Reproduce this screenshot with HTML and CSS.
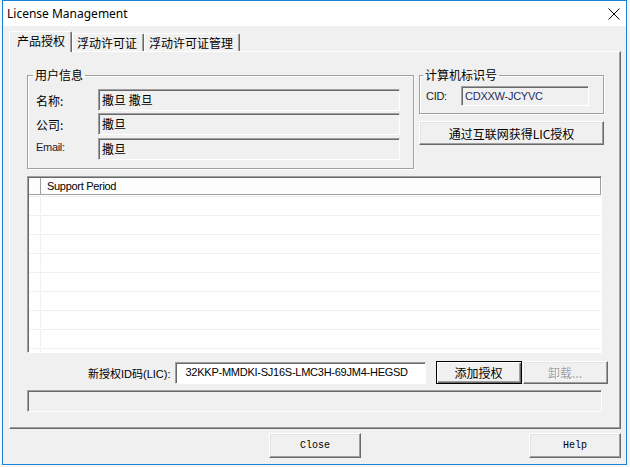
FILE: index.html
```html
<!DOCTYPE html>
<html lang="zh">

<head>
  <meta charset="UTF-8">
  <title>License Management</title>
  <link rel="stylesheet" href="styles.css">
</head>

<body>
  <div class="window">
    <div class="titlebar">
      <span class="title">License Management</span>
      <svg class="close-x" width="12" height="12" viewBox="0 0 12 12">
        <path d="M0.5 0.5 L11.5 11.5 M11.5 0.5 L0.5 11.5" stroke="#000" stroke-width="1" fill="none" />
      </svg>
    </div>

    <div class="dialog">
      <div class="tabs">
        <div class="tab active">产品授权</div>
        <div class="tab">浮动许可证</div>
        <div class="tab">浮动许可证管理</div>
      </div>

      <div class="panel">
        <div class="top-row">
          <!-- user info -->
          <fieldset class="group user-group">
            <legend>用户信息</legend>
            <div class="field-row">
              <span class="label">名称:</span>
              <div class="field">撒旦 撒旦</div>
            </div>
            <div class="field-row">
              <span class="label">公司:</span>
              <div class="field">撒旦</div>
            </div>
            <div class="field-row email-row">
              <span class="label latin email-label">Email:</span>
              <div class="field">撒旦</div>
            </div>
          </fieldset>

          <div class="right-col">
            <fieldset class="group cid-group">
              <legend>计算机标识号</legend>
              <div class="field-row cid-row">
                <span class="label latin cid-label">CID:</span>
                <div class="field cid-field">CDXXW-JCYVC</div>
              </div>
            </fieldset>
            <button class="btn wide-btn">通过互联网获得LIC授权</button>
          </div>
        </div>

        <!-- license list -->
        <div class="listview">
          <div class="lv-header">
            <div class="lv-col0"></div>
            <div class="lv-col1">Support Period</div>
          </div>
          <div class="lv-body">
            <div class="lv-row"><div class="lv-col0"></div><div class="lv-col1"></div></div>
            <div class="lv-row"><div class="lv-col0"></div><div class="lv-col1"></div></div>
            <div class="lv-row"><div class="lv-col0"></div><div class="lv-col1"></div></div>
            <div class="lv-row"><div class="lv-col0"></div><div class="lv-col1"></div></div>
            <div class="lv-row"><div class="lv-col0"></div><div class="lv-col1"></div></div>
            <div class="lv-row"><div class="lv-col0"></div><div class="lv-col1"></div></div>
            <div class="lv-row"><div class="lv-col0"></div><div class="lv-col1"></div></div>
            <div class="lv-row"><div class="lv-col0"></div><div class="lv-col1"></div></div>
            <div class="lv-row"><div class="lv-col0"></div><div class="lv-col1"></div></div>
            <div class="lv-row"><div class="lv-col0"></div><div class="lv-col1"></div></div>
          </div>
        </div>

        <div class="lic-row">
          <span class="lic-label">新授权ID码(LIC):</span>
          <div class="lic-input">32KKP-MMDKI-SJ16S-LMC3H-69JM4-HEGSD</div>
          <button class="btn default-btn">添加授权</button>
          <button class="btn disabled-btn" disabled>卸载...</button>
        </div>

        <div class="statusbar"></div>
      </div>

      <div class="footer">
        <button class="btn sys-btn close-btn">Close</button>
        <button class="btn sys-btn help-btn">Help</button>
      </div>
    </div>
  </div>
</body>

</html>
```

FILE: styles.css
```css
/* General */
body {
  margin: 0;
  background-color: #f6f6f6;
  font-family: 'Liberation Sans', 'Noto Sans CJK SC', sans-serif;
  font-size: 12px;
  color: #000;
}

.window {
  margin-left: 2px;
  width: 625px;
  height: 465px;
  box-sizing: border-box;
  border: 1px solid #1883d7;
  background-color: #f0f0f0;
  display: flex;
  flex-direction: column;
}

/* Title bar */
.titlebar {
  height: 25px;
  background-color: #ffffff;
  display: flex;
  align-items: center;
  justify-content: space-between;
  padding-left: 4px;
}

.title {
  font-family: 'Noto Sans', sans-serif;
  font-size: 12px;
  color: #000;
}

.close-x {
  margin-right: 6px;
}

/* Dialog body */
.dialog {
  flex: 1;
  padding: 5px 0 0 6px;
}

.tabs {
  display: flex;
  align-items: flex-end;
  height: 20px;
}

.tab {
  height: 18px;
  box-sizing: border-box;
  padding: 0 6px 0 4px;
  border-top: 1px solid #ffffff;
  border-left: 1px solid #ffffff;
  border-right: 1px solid #696969;
  box-shadow: inset -1px 0 0 #a0a0a0;
  background-color: #f0f0f0;
  font-family: 'Noto Sans CJK SC', sans-serif;
  font-size: 12px;
  line-height: 17px;
  border-radius: 2px 2px 0 0;
}

.tab.active {
  height: 21px;
  margin-bottom: -1px;
  padding: 0 6px 0 7px;
  line-height: 18px;
  position: relative;
  z-index: 1;
}

.panel {
  width: 612px;
  height: 378px;
  box-sizing: border-box;
  border-top: 1px solid #ffffff;
  border-left: 1px solid #ffffff;
  border-right: 1px solid #696969;
  border-bottom: 1px solid #696969;
  box-shadow: inset -1px -1px 0 #a0a0a0;
  padding: 15px 0 0 17px;
}

.top-row {
  display: flex;
  align-items: flex-start;
}

/* Group boxes */
.group {
  margin: 0;
  min-width: 0;
  box-sizing: border-box;
  border: 1px solid #a0a0a0;
  box-shadow: 1px 1px 0 #ffffff, inset 1px 1px 0 #ffffff;
}

.group legend {
  padding: 0 2px;
  margin-left: -3px;
  font-family: 'Noto Sans CJK SC', sans-serif;
  font-size: 12px;
  line-height: 16px;
}

.user-group {
  width: 387px;
  padding: 6px 12px 8px 8px;
  display: flex;
  flex-direction: column;
  gap: 2px;
}

.email-row {
  margin-top: 1px;
}

.field-row {
  display: flex;
  align-items: center;
}

.label {
  width: 62px;
  font-family: 'Noto Sans CJK SC', sans-serif;
  font-size: 12px;
}

.label.latin {
  font-family: 'Liberation Sans', sans-serif;
  font-size: 11px;
  letter-spacing: -0.3px;
  color: #1a1a2a;
}

.email-label {
  margin-top: -4px;
}

.field {
  width: 302px;
  height: 22px;
  box-sizing: border-box;
  border: 1px solid;
  border-color: #a0a0a0 #ffffff #ffffff #a0a0a0;
  box-shadow: inset 1px 1px 0 #696969;
  padding-left: 3px;
  font-family: 'Noto Sans CJK SC', sans-serif;
  font-size: 12px;
  line-height: 20px;
}

.right-col {
  margin-left: 5px;
  display: flex;
  flex-direction: column;
}

.cid-group {
  width: 185px;
  padding: 3px 14px 7px 6px;
}

.cid-label {
  width: 35px;
  color: #1f2f5f;
}

.cid-field {
  width: 128px;
  height: 20px;
  line-height: 18px;
  font-family: 'Liberation Sans', sans-serif;
  font-size: 11px;
  letter-spacing: -0.25px;
  color: #1f2f5f;
}

/* Buttons */
.btn {
  margin: 0;
  padding: 0;
  box-sizing: border-box;
  background-color: #f0f0f0;
  border: 1px solid;
  border-color: #ffffff #696969 #696969 #ffffff;
  box-shadow: inset -1px -1px 0 #a0a0a0, inset 1px 1px 0 #e3e3e3;
  font-family: 'Noto Sans CJK SC', sans-serif;
  font-size: 12px;
  color: #000;
  text-align: center;
}

.wide-btn {
  margin-top: 7px;
  width: 185px;
  height: 24px;
}

/* List view */
.listview {
  margin-top: 7px;
  width: 575px;
  height: 177px;
  box-sizing: border-box;
  border: 1px solid;
  border-color: #a0a0a0 #ffffff #ffffff #a0a0a0;
  box-shadow: inset 1px 1px 0 #696969;
  background-color: #ffffff;
  padding: 1px 0 0 1px;
  overflow: hidden;
}

.lv-header {
  display: flex;
  height: 16px;
  border-bottom: 1px solid #a0a0a0;
  background-color: #fdfdfd;
}

.lv-header .lv-col1 {
  font-size: 11px;
  letter-spacing: -0.3px;
  line-height: 16px;
  padding-left: 6px;
  width: 559px;
  border-right: 1px solid #a0a0a0;
}

.lv-col0 {
  width: 11px;
  border-right: 1px solid #e3e3e3;
  flex-shrink: 0;
}

.lv-header .lv-col0 {
  border-right-color: #a0a0a0;
}

.lv-row {
  display: flex;
  height: 17px;
  border-top: 1px solid #f0f0f0;
  margin-top: 1px;
}

.lv-row .lv-col0 {
  border-right-color: #f0f0f0;
}

/* License input row */
.lic-row {
  margin-top: 8px;
  display: flex;
  align-items: center;
  padding-left: 61px;
}

.lic-label {
  font-size: 11px;
  margin-right: 4px;
  white-space: nowrap;
}

.lic-input {
  width: 251px;
  height: 22px;
  box-sizing: border-box;
  border: 1px solid;
  border-color: #a0a0a0 #ffffff #ffffff #a0a0a0;
  box-shadow: inset 1px 1px 0 #696969;
  background-color: #ffffff;
  font-size: 11px;
  letter-spacing: -0.25px;
  line-height: 19px;
  padding-left: 10px;
  white-space: nowrap;
}

.default-btn {
  margin-left: 10px;
  width: 86px;
  height: 23px;
  border-color: #000;
  box-shadow: inset 1px 1px 0 #ffffff, inset -1px -1px 0 #696969, inset -2px -2px 0 #a0a0a0;
}

.disabled-btn {
  margin-left: 1px;
  width: 85px;
  height: 23px;
  color: #a0a0a0;
  text-shadow: 1px 1px 0 #ffffff;
}

.statusbar {
  margin-top: 6px;
  width: 575px;
  height: 22px;
  box-sizing: border-box;
  border: 1px solid;
  border-color: #a0a0a0 #ffffff #ffffff #a0a0a0;
  box-shadow: inset 1px 1px 0 #696969;
}

/* Footer */
.footer {
  display: flex;
  padding-top: 4px;
}

.sys-btn {
  width: 92px;
  height: 25px;
  font-family: 'Liberation Mono', monospace;
  font-size: 10px;
}

.close-btn {
  margin-left: 260px;
}

.help-btn {
  margin-left: 168px;
}
```
